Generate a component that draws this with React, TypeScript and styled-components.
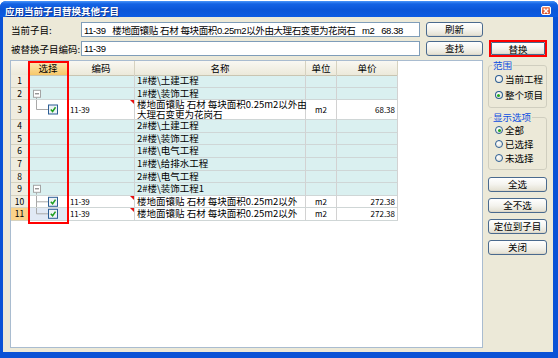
import React from 'react'
import styled, { createGlobalStyle, css } from 'styled-components'

const GlobalStyle = createGlobalStyle`
    html, body {
        margin: 0;
        padding: 0;
        background: #ffffff;
    }
    body {
        width: 558px;
        height: 358px;
        overflow: hidden;
        font-family: 'Liberation Sans', 'Noto Sans CJK SC', sans-serif;
        font-size: 9.5px;
        color: #000;
    }
`

const COLS = '18px 39px 67px 171px 31px 61px'
const ROW_H = 12.6

const Window = styled.div`
    box-sizing: border-box;
    margin-top: 1px;
    width: 558px;
    height: 357px;
    display: flex;
    flex-direction: column;
    background: #0a52d6;
    border-radius: 6px 6px 0 0;
    overflow: hidden;
`

const TitleBar = styled.div`
    box-sizing: border-box;
    height: 16px;
    display: flex;
    align-items: center;
    justify-content: space-between;
    padding: 3px 7px 0 5px;
    background: linear-gradient(180deg, #4a95f8 0%, #1463e4 18%, #0b56d8 55%, #0c5be2 100%);
    color: #ffffff;
    font-family: 'Noto Sans CJK SC', sans-serif;
    font-weight: 700;
    font-size: 9.5px;
    text-shadow: 1px 1px 0 #0a2e8a;
`

const CloseBox = styled.div`
    box-sizing: border-box;
    width: 10px;
    height: 9px;
    border: 1px solid #ffffff;
    border-radius: 2px;
    background: linear-gradient(180deg, #f0906c, #d9441c);
    display: flex;
    align-items: center;
    justify-content: center;
`

const Frame = styled.div`
    flex: 1;
    display: flex;
    padding: 0 5px 6px 3px;
    min-height: 0;
`

const Body = styled.div`
    flex: 1;
    display: grid;
    grid-template-columns: 473px 59px;
    grid-template-rows: 15px 15px 1fr;
    column-gap: 5px;
    row-gap: 4px;
    padding: 5px 6px 4px 7px;
    background: #ece9d8;
    font-family: 'Noto Sans CJK SC', sans-serif;
`

const FieldRow = styled.div`
    display: flex;
    align-items: center;
    gap: 6px;
`

const Label = styled.label`
    width: 64px;
    flex-shrink: 0;
    white-space: nowrap;
    font-size: 9.5px;
    padding-left: 1px;
`

const TextBox = styled.input`
    box-sizing: border-box;
    flex: 1;
    height: 15px;
    border: 1px solid #7f9db9;
    background: #ffffff;
    padding: 0 2px;
    font-family: 'Liberation Sans', 'Noto Sans CJK SC', sans-serif;
    font-size: 9.5px;
    letter-spacing: -0.4px;
    white-space: pre;
    outline: none;
    color: #000;
`

const XpButton = styled.button`
    box-sizing: border-box;
    height: 15px;
    padding: 0;
    border: 1px solid #4a6a8e;
    border-radius: 3px;
    background: linear-gradient(180deg, #ffffff 0%, #f4f3ee 50%, #e6e3d6 90%, #d6d0c2 100%);
    font-family: 'Noto Sans CJK SC', sans-serif;
    font-size: 9.5px;
    line-height: 13px;
    color: #000;
    cursor: pointer;
    flex-shrink: 0;
    width: ${p => (p.$w ? `${p.$w}px` : '100%')};
`

const Highlight = styled.div`
    box-sizing: border-box;
    height: 17px;
    align-self: center;
    margin-left: 1px;
    border: 2px solid #ff0000;
    display: flex;
    ${XpButton} {
        height: 100%;
        width: 100%;
        border-radius: 1px;
    }
`

const GridPanel = styled.div`
    position: relative;
    border: 1px solid #a9bcd0;
    background: #ffffff;
    overflow: hidden;
`

const ColumnMark = styled.div`
    position: absolute;
    left: 17px;
    top: 0;
    width: 41px;
    height: 163px;
    box-sizing: border-box;
    border: 2px solid #ff0000;
    pointer-events: none;
`

const GridRow = styled.div`
    display: grid;
    grid-template-columns: ${COLS};
    width: 387px;
    height: ${p => p.$h}px;
    background: ${p => (p.$group ? '#daf0f0' : '#ffffff')};
`

const Cell = styled.div`
    position: relative;
    box-sizing: border-box;
    display: flex;
    align-items: center;
    min-width: 0;
    border-right: 1px solid #d2d2d2;
    border-bottom: 1px solid #cfd6d6;
    padding: 0 2px;
    white-space: pre;
    font-size: 9.5px;
    line-height: 9.6px;
    justify-content: ${p => p.$align || 'flex-start'};
    ${p => p.$flag && css`
        &::after {
            content: '';
            position: absolute;
            top: 0;
            right: 0;
            border-top: 4px solid #e81010;
            border-left: 4px solid transparent;
        }
    `}
`

const NumCell = styled(Cell)`
    justify-content: center;
    padding: 0;
    font-size: 8.5px;
    background: ${p => (p.$active ? '#f9d28a' : '#efecdf')};
    border-right-color: #cdc9b6;
    border-bottom-color: #d6d2bf;
`

const PickCell = styled(Cell)`
    padding: 0;
    background: ${p => (p.$active ? '#e1e9f5' : 'transparent')};
`

const CodeCell = styled(Cell)`
    font-size: 8px;
    letter-spacing: -0.2px;
`

const SmallCell = styled(Cell)`
    font-size: 8px;
`

const HeadRow = styled.div`
    display: grid;
    grid-template-columns: ${COLS};
    width: 387px;
    height: 14px;
`

const HeadCell = styled.div`
    box-sizing: border-box;
    display: flex;
    align-items: center;
    justify-content: center;
    border-right: 1px solid #d6d2c0;
    border-bottom: 1px solid #c9c5b2;
    font-family: 'Noto Sans CJK SC', sans-serif;
    font-size: 9.5px;
    background: ${p => (p.$hot
        ? 'linear-gradient(180deg, #fde9ba 0%, #f6c869 100%)'
        : 'linear-gradient(180deg, #f9f8f2 0%, #ece9da 100%)')};
`

const SidePanel = styled.div`
    display: flex;
    flex-direction: column;
`

const Group = styled.fieldset`
    box-sizing: border-box;
    margin: 0;
    min-width: 0;
    padding: 0 3px ${p => p.$pb}px 6px;
    border: 1px solid #d0cebf;
    border-radius: 3px;
    margin-bottom: ${p => p.$mb}px;
`

const Legend = styled.legend`
    padding: 0 1px;
    margin-left: -3px;
    color: #0b4ee0;
    font-size: 9.5px;
    line-height: 11px;
`

const RadioRow = styled.div`
    display: flex;
    align-items: center;
    gap: 2px;
    height: ${p => p.$h}px;
    font-size: 9.5px;
    white-space: nowrap;
`

const RadioDot = styled.span`
    box-sizing: border-box;
    width: 8px;
    height: 8px;
    border-radius: 50%;
    border: 1px solid #2b5d94;
    background: radial-gradient(circle at 35% 35%, #ffffff, #dcdcd2);
    display: flex;
    align-items: center;
    justify-content: center;
    &::after {
        content: '';
        width: 3px;
        height: 3px;
        border-radius: 50%;
        background: ${p => (p.$checked ? '#22a822' : 'transparent')};
    }
`

const ButtonStack = styled.div`
    display: flex;
    flex-direction: column;
    gap: 6px;
`

type TreeKind = 'root' | 'child' | 'last'

const TreeGlyph = ({ kind, h }: { kind: TreeKind; h: number }) => {
    const mid = h / 2
    if (kind === 'root') {
        return (
            <svg width={39} height={h} style={{ display: 'block' }}>
                <line x1={7.5} y1={mid + 3.5} x2={7.5} y2={h} stroke="#a9a9a9" />
                <rect x={4.5} y={mid - 3.5} width={7} height={7} fill="#fff" stroke="#a4a4a4" />
                <line x1={6} y1={mid} x2={10} y2={mid} stroke="#6a6a6a" />
            </svg>
        )
    }
    return (
        <svg width={39} height={h} style={{ display: 'block' }}>
            <line x1={7.5} y1={0} x2={7.5} y2={kind === 'last' ? mid : h} stroke="#a9a9a9" />
            <line x1={7.5} y1={mid} x2={19} y2={mid} stroke="#a9a9a9" />
            <rect x={19.5} y={mid - 4.5} width={9} height={9} fill="#eef2f7" stroke="#2b5d94" />
            <path d={`M21.8 ${mid} L23.6 ${mid + 2} L26.5 ${mid - 2.2}`} fill="none" stroke="#1f9f1f" strokeWidth={1.5} />
        </svg>
    )
}

type Row = {
    no: number
    code?: string
    name: string
    unit?: string
    price?: string
    tree?: TreeKind
    h?: number
    active?: boolean
}

const rows: Row[] = [
    { no: 1, name: '1#楼\\土建工程' },
    { no: 2, name: '1#楼\\装饰工程', tree: 'root' },
    { no: 3, code: '11-39', name: '楼地面镶贴 石材 每块面积0.25m2以外由\n大理石变更为花岗石', unit: 'm2', price: '68.38', tree: 'last', h: 20 },
    { no: 4, name: '2#楼\\土建工程' },
    { no: 5, name: '2#楼\\装饰工程' },
    { no: 6, name: '1#楼\\电气工程' },
    { no: 7, name: '1#楼\\给排水工程' },
    { no: 8, name: '2#楼\\电气工程' },
    { no: 9, name: '2#楼\\装饰工程1', tree: 'root' },
    { no: 10, code: '11-39', name: '楼地面镶贴 石材 每块面积0.25m2以外', unit: 'm2', price: '272.38', tree: 'child' },
    { no: 11, code: '11-39', name: '楼地面镶贴 石材 每块面积0.25m2以外', unit: 'm2', price: '272.38', tree: 'last', active: true },
]

const CloseIcon = () => (
    <svg width={6} height={6} viewBox="0 0 6 6">
        <path d="M0.8 0.8 L5.2 5.2 M5.2 0.8 L0.8 5.2" stroke="#fff" strokeWidth={1.4} />
    </svg>
)

const App = () => {
    return (
        <>
            <GlobalStyle />
            <Window>
                <TitleBar>
                    <span>应用当前子目替换其他子目</span>
                    <CloseBox><CloseIcon /></CloseBox>
                </TitleBar>
                <Frame>
                    <Body>
                        <FieldRow>
                            <Label>当前子目:</Label>
                            <TextBox readOnly value="11-39   楼地面镶贴 石材 每块面积0.25m2以外由大理石变更为花岗石   m2   68.38" />
                            <XpButton $w={57}>刷新</XpButton>
                        </FieldRow>
                        <div />
                        <FieldRow>
                            <Label>被替换子目编码:</Label>
                            <TextBox readOnly value="11-39" />
                            <XpButton $w={57}>查找</XpButton>
                        </FieldRow>
                        <Highlight>
                            <XpButton>替换</XpButton>
                        </Highlight>
                        <GridPanel>
                            <HeadRow>
                                <HeadCell />
                                <HeadCell $hot>选择</HeadCell>
                                <HeadCell>编码</HeadCell>
                                <HeadCell>名称</HeadCell>
                                <HeadCell>单位</HeadCell>
                                <HeadCell>单价</HeadCell>
                            </HeadRow>
                            {rows.map(r => {
                                const h = r.h || ROW_H
                                return (
                                    <GridRow key={r.no} $h={h} $group={!r.code}>
                                        <NumCell $active={r.active}>{r.no}</NumCell>
                                        <PickCell $active={r.active}>
                                            {r.tree && <TreeGlyph kind={r.tree} h={h - 1} />}
                                        </PickCell>
                                        <CodeCell $flag={!!r.code}>{r.code}</CodeCell>
                                        <Cell>{r.name}</Cell>
                                        <SmallCell $align="center">{r.unit}</SmallCell>
                                        <SmallCell $align="flex-end">{r.price}</SmallCell>
                                    </GridRow>
                                )
                            })}
                            <ColumnMark />
                        </GridPanel>
                        <SidePanel>
                            <Group $pb={4} $mb={4}>
                                <Legend>范围</Legend>
                                <RadioRow $h={16}><RadioDot />当前工程</RadioRow>
                                <RadioRow $h={16}><RadioDot $checked />整个项目</RadioRow>
                            </Group>
                            <Group $pb={4} $mb={7}>
                                <Legend>显示选项</Legend>
                                <RadioRow $h={14}><RadioDot $checked />全部</RadioRow>
                                <RadioRow $h={14}><RadioDot />已选择</RadioRow>
                                <RadioRow $h={14}><RadioDot />未选择</RadioRow>
                            </Group>
                            <ButtonStack>
                                <XpButton>全选</XpButton>
                                <XpButton>全不选</XpButton>
                                <XpButton>定位到子目</XpButton>
                                <XpButton>关闭</XpButton>
                            </ButtonStack>
                        </SidePanel>
                    </Body>
                </Frame>
            </Window>
        </>
    )
}

export default App
